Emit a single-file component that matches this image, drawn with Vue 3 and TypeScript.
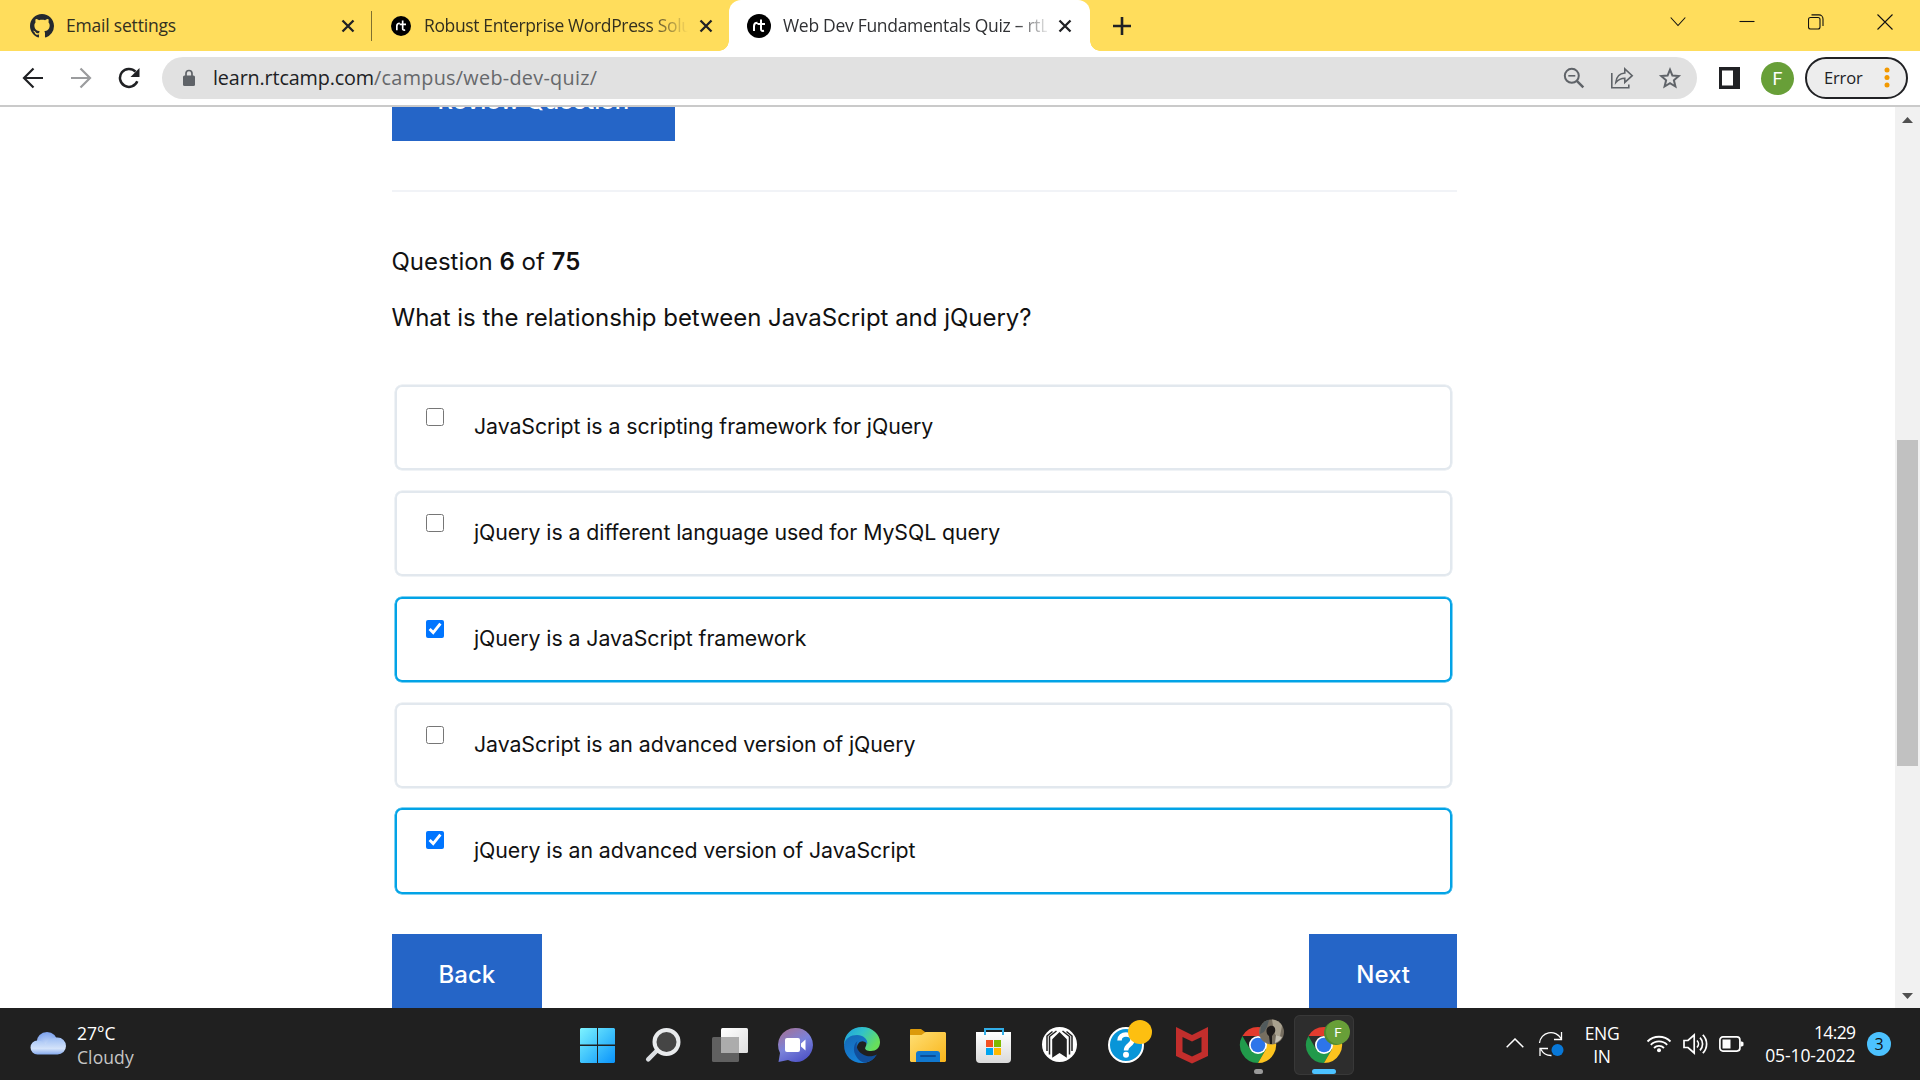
<script setup lang="ts">
interface Option {
  text: string
  checked: boolean
}

const options: Option[] = [
  { text: 'JavaScript is a scripting framework for jQuery', checked: false },
  { text: 'jQuery is a different language used for MySQL query', checked: false },
  { text: 'jQuery is a JavaScript framework', checked: true },
  { text: 'JavaScript is an advanced version of jQuery', checked: false },
  { text: 'jQuery is an advanced version of JavaScript', checked: true },
]
</script>

<template>
  <div class="screen">
    <header class="tabs">
      <div class="tab tab-one">
        <svg class="favicon" width="24" height="24" viewBox="0 0 16 16" fill="#24292f"><path d="M8 0C3.58 0 0 3.58 0 8c0 3.54 2.29 6.53 5.47 7.59.4.07.55-.17.55-.38 0-.19-.01-.82-.01-1.49-2.01.37-2.53-.49-2.69-.94-.09-.23-.48-.94-.82-1.13-.28-.15-.68-.52-.01-.53.63-.01 1.08.58 1.23.82.72 1.21 1.87.87 2.33.66.07-.52.28-.87.51-1.07-1.78-.2-3.64-.89-3.64-3.95 0-.87.31-1.59.82-2.15-.08-.2-.36-1.02.08-2.12 0 0 .67-.21 2.2.82.64-.18 1.32-.27 2-.27s1.36.09 2 .27c1.53-1.04 2.2-.82 2.2-.82.44 1.1.16 1.92.08 2.12.51.56.82 1.27.82 2.15 0 3.07-1.87 3.75-3.65 3.95.29.25.54.73.54 1.48 0 1.07-.01 1.93-.01 2.2 0 .21.15.46.55.38A8.01 8.01 0 0 0 16 8c0-4.42-3.58-8-8-8z"/></svg>
        <span class="tab-title">Email settings</span>
        <svg class="close" width="14" height="14" viewBox="0 0 14 14"><path d="M1.5 1.5l11 11M12.500 1.500l-11 11" stroke="#202124" stroke-width="2.300"/></svg>
      </div>
      <div class="separator"></div>
      <div class="tab tab-two">
        <svg class="favicon" width="20" height="20" viewBox="0 0 24 24"><circle cx="12" cy="12" r="12"/><path d="M7 17V12c0-2.200 1-3.300 3.500-3.300M14 5.500v9.500c0 1.600.8 2.200 3 1.800M10.500 10h7.500" fill="none" stroke="#fff" stroke-width="2"/></svg>
        <span class="tab-title fade-yellow">Robust Enterprise WordPress Solu</span>
        <svg class="close" width="14" height="14" viewBox="0 0 14 14"><path d="M1.500 1.500l11 11M12.500 1.500l-11 11" stroke="#202124" stroke-width="2.300"/></svg>
      </div>
      <div class="tab tab-active">
        <svg class="favicon" width="24" height="24" viewBox="0 0 24 24"><circle cx="12" cy="12" r="12"/><path d="M7 17V12c0-2.200 1-3.300 3.500-3.300M14 5.500v9.500c0 1.600.8 2.200 3 1.800M10.500 10h7.500" fill="none" stroke="#fff" stroke-width="2"/></svg>
        <span class="tab-title fade-white">Web Dev Fundamentals Quiz – rtL</span>
        <svg class="close" width="14" height="14" viewBox="0 0 14 14"><path d="M1.500 1.500l11 11M12.500 1.500l-11 11" stroke="#202124" stroke-width="2.300"/></svg>
      </div>
      <svg class="plus" width="18" height="18" viewBox="0 0 18 18"><path d="M9 0v18M0 9h18" stroke="#202124" stroke-width="2.600"/></svg>
      <div class="window-buttons">
        <svg width="16" height="16" viewBox="0 0 16 16"><path d="M.7 3.500L8 11.500l7.300-8"/></svg>
        <svg width="16" height="16" viewBox="0 0 16 16"><path d="M.5 7.500h15"/></svg>
        <svg width="16" height="16" viewBox="0 0 16 16"><rect x=".5" y="3.500" width="11.500" height="11.500" rx="2"/><path d="M3.500 .9h7.500a4 4 0 0 1 4 4V12"/></svg>
        <svg width="16" height="16" viewBox="0 0 16 16"><path d="M.5 .5l15 15M15.500 .5l-15 15"/></svg>
      </div>
    </header>

    <div class="toolbar">
      <div class="nav">
        <svg width="22" height="22" viewBox="0 0 22 22" fill="none" stroke="#202124" stroke-width="2.200"><path d="M21 11H2.500M11.500 1.500L2 11l9.500 9.500"/></svg>
        <svg width="22" height="22" viewBox="0 0 22 22" fill="none" stroke="#9b9c9e" stroke-width="2.200"><path d="M1 11h18.500M10.500 1.500L20 11l-9.500 9.500"/></svg>
        <svg width="22" height="22" viewBox="0 0 22 22"><path d="M19.300 14.300A9 9 0 1 1 17.500 4.700" fill="none" stroke="#202124" stroke-width="2.500"/><path d="M21.500 1v9h-9z" fill="#202124"/></svg>
      </div>
      <div class="omnibox">
        <svg class="lock" width="14" height="18" viewBox="0 0 14 18"><rect x="1" y="6.500" width="12" height="10.500" rx="1.500" fill="#5f6368"/><path d="M4 7V4.500a3 3 0 0 1 6 0V7" fill="none" stroke="#5f6368" stroke-width="1.700"/></svg>
        <div class="url"><span class="host">learn.rtcamp.com</span><span class="path">/campus/web-dev-quiz/</span></div>
        <div class="omni-icons">
          <svg width="24" height="24" viewBox="0 0 24 24" fill="none" stroke="#5f6368" stroke-width="2"><circle cx="9.800" cy="9.800" r="7"/><path d="M6.300 9.800h7" stroke-width="1.600"/><path d="M14.800 14.800l6.500 6.500" stroke-width="2.500"/></svg>
          <svg width="24" height="24" viewBox="0 0 24 24" fill="none" stroke="#5f6368" stroke-width="1.600"><path d="M1.800 7v14.700h17V18.500"/><path d="M5.800 16.500c.5-5.500 3.500-9 9-9.500V2.800l7.400 6.900-7.400 6.700v-4.200c-4 0-6.500 1.300-9 4.300z"/></svg>
          <svg width="24" height="24" viewBox="0 0 24 24" fill="none" stroke="#5f6368" stroke-width="2"><path d="M12 3.700l2.400 5.900 6.300.5-4.800 4.200 1.500 6.200L12 17.200l-5.400 3.300 1.500-6.200-4.800-4.200 6.300-.5z"/></svg>
        </div>
      </div>
      <svg class="panel" width="21" height="22" viewBox="0 0 21 22"><path d="M0 0h21v22H0z" fill="#202124"/><path d="M3 3.500h11v15H3z" fill="#fff"/></svg>
      <div class="avatar">F</div>
      <div class="error">
        <span>Error</span>
        <svg width="6" height="22" viewBox="0 0 6 22" fill="#f29900"><circle cx="3" cy="3" r="2.500"/><circle cx="3" cy="10.500" r="2.500"/><circle cx="3" cy="18" r="2.500"/></svg>
      </div>
    </div>

    <div class="viewport">
      <main class="page">
        <button class="btn review">Review Question</button>
        <hr>
        <p class="count">Question <b>6</b> of <b>75</b></p>
        <p class="question">What is the relationship between JavaScript and jQuery?</p>
        <div class="options">
          <label v-for="option in options" :key="option.text" class="option" :class="{ selected: option.checked }">
            <input type="checkbox" :checked="option.checked">
            <span>{{ option.text }}</span>
          </label>
        </div>
        <div class="pager">
          <button class="btn">Back</button>
          <button class="btn">Next</button>
        </div>
      </main>
      <div class="scrollbar">
        <svg width="11" height="6" viewBox="0 0 11 6"><path d="M0 6L5.500 0 11 6z" fill="#505050"/></svg>
        <div class="thumb"></div>
        <svg width="11" height="6" viewBox="0 0 11 6"><path d="M0 0l5.500 6L11 0z" fill="#505050"/></svg>
      </div>
    </div>

    <footer class="taskbar">
      <div class="weather">
        <svg width="36" height="24" viewBox="0 0 36 24">
          <defs>
            <radialGradient id="cloudBack" cx=".5" cy=".75" r=".75"><stop offset=".2" stop-color="#c9dcf8"/><stop offset="1" stop-color="#7da2ee"/></radialGradient>
            <linearGradient id="cloudFront" x2="0" y2="1"><stop offset="0" stop-color="#9dbdf4"/><stop offset=".65" stop-color="#d4e3fa"/><stop offset="1" stop-color="#86abee"/></linearGradient>
          </defs>
          <circle cx="17" cy="11.500" r="10.500" fill="url(#cloudBack)"/>
          <path d="M7.500 9.500C11 9.500 14 11 15.500 13.500C18 9 22 6.500 27.500 6.500a8.500 8.500 0 0 1 0 17H7.500a7 7 0 0 1 0-14z" fill="url(#cloudFront)"/>
        </svg>
        <div class="weather-text"><span>27°C</span><span class="dim">Cloudy</span></div>
      </div>

      <div class="apps">
        <div class="app">
          <svg viewBox="0 0 60 60">
            <defs><linearGradient id="win" gradientUnits="userSpaceOnUse" x1="12" y1="13" x2="47" y2="48"><stop stop-color="#7df3ff"/><stop offset=".5" stop-color="#41c4fc"/><stop offset="1" stop-color="#0a93fb"/></linearGradient></defs>
            <path d="M13 13h16v16.500H12V14zM30 13h16l1 1v15.500H30zM12 31h17v17H13l-1-1zM30 31h17v16l-1 1H30z" fill="url(#win)"/>
          </svg>
        </div>
        <div class="app">
          <svg viewBox="0 0 60 60">
            <path d="M22.500 36l-8.300 8.300" stroke="#dcdfe3" stroke-width="4.500" stroke-linecap="round"/>
            <circle cx="32.500" cy="27" r="12" fill="#454545" stroke="#e9ebed" stroke-width="4"/>
          </svg>
        </div>
        <div class="app">
          <svg viewBox="0 0 60 60">
            <defs><linearGradient id="tv" x2="1" y2="1"><stop stop-color="#fff"/><stop offset="1" stop-color="#dedede"/></linearGradient></defs>
            <rect x="21" y="13" width="27" height="25" rx="1.500" fill="url(#tv)"/>
            <rect x="12" y="22" width="27" height="25" rx="1.500" fill="#606060"/>
            <path d="M21 22h18v16H21z" fill="#acacac"/>
          </svg>
        </div>
        <div class="app">
          <svg viewBox="0 0 60 60">
            <defs><linearGradient id="chat" x1=".1" y1=".1" x2=".6" y2="1"><stop stop-color="#a0739d"/><stop offset=".5" stop-color="#7b83da"/><stop offset="1" stop-color="#5257c9"/></linearGradient></defs>
            <path d="M29 13a17 17 0 1 1-7 32l-9.500 2 1.500-9A17 17 0 0 1 29 13z" fill="url(#chat)"/>
            <rect x="19" y="23" width="15" height="14" rx="2" fill="#fff"/><path d="M35 28.500l4.500-4v11l-4.500-4z" fill="#fff"/>
          </svg>
        </div>
        <div class="app">
          <svg viewBox="0 0 60 60">
            <defs>
              <linearGradient id="edgeTop" x2="1" y2=".5"><stop stop-color="#1b9de2"/><stop offset=".5" stop-color="#32c2c8"/><stop offset="1" stop-color="#67df5b"/></linearGradient>
              <linearGradient id="edgeLow" x2=".5" y2="1"><stop stop-color="#1568b5"/><stop offset="1" stop-color="#1683d9"/></linearGradient>
            </defs>
            <path d="M12 30C12 19 20 12 30 12c11 0 18 8 18 15 0 6-4 9-9 9-4 0-7-1.500-5.500-4 3-5-1-9-7-9-6 0-11 2-14.500 7z" fill="url(#edgeTop)"/>
            <path d="M12 30c1-7 7-10 13-10 6 0 11 4 10.300 9C31 23.500 25 27 25 33c0 8 9 14 18 8.500-3 4-7 6.500-13 6.500-10 0-18-7-18-18z" fill="url(#edgeLow)"/>
            <path d="M25.500 26C22 29 21 34 23 39c2 5 5.500 8 10 8.800 5-.8 9-3.500 12-8.300-4 2-9 2.500-13 .5-6-3-9-8-6.500-14z" fill="#114f9c"/>
          </svg>
        </div>
        <div class="app">
          <svg viewBox="0 0 60 60">
            <defs><linearGradient id="folder" x2="1" y2="1"><stop stop-color="#ffdf74"/><stop offset="1" stop-color="#f9b51a"/></linearGradient></defs>
            <path d="M12 15a1 1 0 0 1 1-1h10l4 3v5H12z" fill="#dc9a0b"/>
            <path d="M12 20h11.500l4-3H47l1 1v28l-1 1H13l-1-1z" fill="url(#folder)"/>
            <path d="M18 47v-8a3 3 0 0 1 3-3h18a3 3 0 0 1 3 3v8z" fill="#1178cf"/>
            <path d="M23 41h14" stroke="#0b4e98" stroke-width="2" stroke-linecap="round"/>
          </svg>
        </div>
        <div class="app">
          <svg viewBox="0 0 60 60">
            <defs><linearGradient id="bag" x2="0" y2="1"><stop stop-color="#fff"/><stop offset="1" stop-color="#dadada"/></linearGradient></defs>
            <path d="M12 17h35v27a4 4 0 0 1-4 4H16a4 4 0 0 1-4-4z" fill="url(#bag)"/>
            <path d="M21 20v-6h18v6" fill="none" stroke="#32aee8" stroke-width="2"/>
            <path d="M22 25h7v7h-7z" fill="#f25022"/><path d="M30 25h7v7h-7z" fill="#7fba00"/><path d="M22 33h7v7h-7z" fill="#00a4ef"/><path d="M30 33h7v7h-7z" fill="#ffb900"/>
          </svg>
        </div>
        <div class="app">
          <svg viewBox="0 0 60 60">
            <circle cx="29.500" cy="29.500" r="17.500" fill="#fff"/>
            <path d="M29.500 17l7.300 7.300v18.400l-7.300-4.700-7.300 4.700V24.300z" fill="#222"/>
            <path d="M26.500 16l-7 5.500V39.500M22.500 16.500l-5.500 4.500V36M32.500 16l7 5.500V39.500M36.500 16.500l5.500 4.500V36" fill="none" stroke="#222" stroke-width="1.500"/>
          </svg>
        </div>
        <div class="app">
          <svg viewBox="0 0 60 60">
            <circle cx="30" cy="30" r="17" fill="#0895d8" stroke="#fff" stroke-width="2"/>
            <path d="M23.500 25.500c0-4 3-6 6.500-6s6.500 2 6.500 5.500c0 5-6.500 4.500-6.500 10.500" fill="none" stroke="#fff" stroke-width="4.500"/>
            <circle cx="30" cy="39.700" r="3" fill="#fff"/>
            <circle cx="44" cy="17" r="12" fill="#fdbf10"/>
          </svg>
        </div>
        <div class="app">
          <svg viewBox="0 0 60 60"><path d="M14 12l16 8 16-8v29l-16 7.500L14 41zM20.500 22v15l9.500 4.500 9.500-4.500V22L30 26.500z" fill="#c22e2c" fill-rule="evenodd"/></svg>
        </div>
        <div class="app">
          <svg viewBox="0 0 60 60">
            <path d="M14.400 21A18 18 0 0 1 45.600 21H30z" fill="#e33b2e"/><path d="M14.400 21A18 18 0 0 0 30 48l7.800-13.500H22.200z" fill="#219a4b"/><path d="M45.600 21A18 18 0 0 1 30 48l7.800-13.500L38 21z" fill="#fcc31e"/>
            <circle cx="30" cy="30" r="9" fill="#fff"/><circle cx="30" cy="30" r="7.300" fill="#2d75ea"/>
            <circle cx="43.500" cy="17" r="12.500" fill="#766e60"/>
            <path d="M44 4.500a12.500 12.500 0 0 1 10 6l-2 11-5-2-2-9z" fill="#a9a18f"/><path d="M33 11c2.500-4 5-6 8-6l-2 7-3 5-4 2z" fill="#515a5c"/><path d="M48 20l6 2c-1 3-4 5-7 6z" fill="#c5c0b3"/>
            <path d="M42 11c4-1 6 2 5 6l-3 4v8h-2l-1-8c-4-3-3-9 1-10z" fill="#1d1a1a"/>
          </svg>
          <i class="indicator"></i>
        </div>
        <div class="app active">
          <svg viewBox="0 0 60 60">
            <path d="M14.400 21A18 18 0 0 1 45.600 21H30z" fill="#e33b2e"/><path d="M14.400 21A18 18 0 0 0 30 48l7.800-13.500H22.200z" fill="#219a4b"/><path d="M45.600 21A18 18 0 0 1 30 48l7.800-13.500L38 21z" fill="#fcc31e"/>
            <circle cx="30" cy="30" r="9" fill="#fff"/><circle cx="30" cy="30" r="7.300" fill="#2d75ea"/>
            <circle cx="42" cy="18" r="12" fill="#4f8a30"/><circle cx="44" cy="17" r="12" fill="#689f38"/>
            <text x="44" y="21.800" text-anchor="middle" font-family="Roboto, sans-serif" font-size="13.500" fill="#fff">F</text>
          </svg>
          <i class="indicator"></i>
        </div>
      </div>

      <div class="tray">
        <svg class="up" width="18" height="10" viewBox="0 0 18 10"><path d="M.7 9.300L9 1l8.300 8.300" fill="none" stroke="#fff" stroke-width="1.500"/></svg>
        <svg class="sync" width="26" height="26" viewBox="0 0 26 26" fill="none" stroke="#fff" stroke-width="1.300"><path d="M1.500 12A11.500 11.500 0 0 1 23 7.500M23.500 1v7.500H16M13.500 24.500A11.500 11.500 0 0 1 3 18.500M2 25v-7.500h8"/><circle cx="19.500" cy="19" r="6" fill="#0878d8" stroke="none"/></svg>
        <div class="lang"><span>ENG</span><span>IN</span></div>
        <svg class="wifi" width="26" height="20" viewBox="0 0 26 20" fill="none" stroke="#fff" stroke-width="1.800"><path d="M1.500 7.500a16.300 16.300 0 0 1 23 0M4.800 10.800a11.600 11.600 0 0 1 16.400 0M8 14a7 7 0 0 1 10 0"/><circle cx="13" cy="16.300" r="2" fill="#fff" stroke="none"/></svg>
        <svg class="speaker" width="26" height="22" viewBox="0 0 26 22" fill="none" stroke="#fff" stroke-width="1.700"><path d="M2 7.500h4L12.200 2v18L6 14.500H2zM15 7.500a5 5 0 0 1 0 7M18 4.700a9 9 0 0 1 0 12.600M20.800 1.800a13 13 0 0 1 0 18.400"/></svg>
        <svg class="battery" width="25" height="16" viewBox="0 0 25 16"><rect x=".9" y=".9" width="20" height="14.200" rx="3" fill="none" stroke="#fff" stroke-width="1.700"/><path d="M3.500 3.500h8v9h-8z" fill="#fff"/><path d="M21.500 5.500h1.500l1.500 1v3l-1.500 1h-1.500z" fill="#fff"/></svg>
        <div class="clock"><span class="time">14:29</span><span>05-10-2022</span></div>
        <div class="notice">3</div>
      </div>
    </footer>
  </div>
</template>

<style>
body {
  margin: 0;
  overflow: hidden;
}
</style>

<style scoped>
* {
  box-sizing: border-box;
}
svg {
  display: block;
  flex: none;
}
.screen {
  width: 1920px;
  height: 1080px;
  display: flex;
  flex-direction: column;
  overflow: hidden;
  background: #fff;
  font-family: "Open Sans", "Noto Sans", sans-serif;
  color: #202124;
}

/* Tab strip */
.tabs {
  height: 51px;
  flex: none;
  display: flex;
  align-items: center;
  background: #ffdd5c;
}
.tab {
  height: 51px;
  display: flex;
  align-items: center;
  font-size: 17.5px;
  line-height: 51px;
  letter-spacing: -0.36px;
}
.favicon {
  flex: none;
}
.tab-title {
  white-space: nowrap;
  overflow: hidden;
  color: #33301f;
}
.tab-one {
  width: 371px;
  padding-left: 30px;
  letter-spacing: -0.2px;
}
.tab-one .tab-title {
  width: 263px;
  margin: 0 12px 0 12px;
}
.separator {
  width: 1px;
  height: 30px;
  background: #80702f;
}
.tab-two {
  width: 357px;
  padding-left: 19px;
}
.tab-two .tab-title {
  width: 264px;
  margin: 0 11px 0 13px;
}
.fade-yellow {
  mask-image: linear-gradient(90deg, #000 225px, transparent 264px);
}
.tab-active {
  position: relative;
  width: 361px;
  padding-left: 18px;
  background: #fff;
  border-radius: 12px 12px 0 0;
}
.tab-active::before,
.tab-active::after {
  content: "";
  position: absolute;
  bottom: 0;
  width: 10px;
  height: 10px;
}
.tab-active::before {
  right: 100%;
  background: radial-gradient(circle at 0 0, transparent 9.5px, #fff 10px);
}
.tab-active::after {
  left: 100%;
  background: radial-gradient(circle at 100% 0, transparent 9.5px, #fff 10px);
}
.tab-active .tab-title {
  width: 264px;
  margin: 0 11px 0 12px;
  color: #303134;
  letter-spacing: -0.3px;
}
.fade-white {
  mask-image: linear-gradient(90deg, #000 232px, transparent 268px);
}
.plus {
  margin-left: 23px;
}
.window-buttons {
  display: flex;
  gap: 53px;
  margin: -8px 27px 0 auto;
}
.window-buttons svg {
  fill: none;
  stroke: #111;
  stroke-width: 1.1;
}

/* Toolbar */
.toolbar {
  height: 56px;
  flex: none;
  display: flex;
  align-items: center;
  border-bottom: 2px solid #cacaca;
}
.nav {
  display: flex;
  gap: 26px;
  width: 162px;
  padding-left: 22px;
}
.omnibox {
  width: 1535px;
  height: 42px;
  border-radius: 21px;
  background: #e1e1e1;
  display: flex;
  align-items: center;
  padding: 0 15px 0 20px;
}
.lock {
  margin-right: 17px;
}
.url {
  display: flex;
  font-size: 19.8px;
  line-height: 42px;
  color: #66686b;
}
.host {
  color: #202124;
  letter-spacing: -0.15px;
}
.path {
  letter-spacing: 0.3px;
}
.omni-icons {
  display: flex;
  gap: 24px;
  margin-left: auto;
}
.panel {
  margin-left: 22px;
}
.avatar {
  width: 33px;
  height: 33px;
  margin-left: 21px;
  border-radius: 50%;
  background: #689f38;
  color: #fff;
  font: 18px/33px Roboto, sans-serif;
  text-align: center;
}
.error {
  width: 103px;
  height: 42px;
  margin-left: 11px;
  border: 2px solid #202124;
  border-radius: 21px;
  background: #ededed;
  display: flex;
  align-items: center;
  justify-content: space-between;
  padding: 0 16px 0 17px;
  font-size: 16.5px;
  letter-spacing: -0.15px;
}
.error span {
  margin-bottom: 2px;
}

/* Page */
.viewport {
  height: 901px;
  flex: none;
  display: flex;
  overflow: hidden;
  font-family: Inter, "Liberation Sans", sans-serif;
  color: #111;
}
.page {
  width: 1065.5px;
  margin-left: 391.5px;
}
.btn {
  display: block;
  height: 83px;
  padding: 0 47px;
  border: 0;
  border-radius: 0;
  background: #2565c7;
  color: #fff;
  font: 500 24px/82px Inter, "Liberation Sans", sans-serif;
  white-space: nowrap;
}
.review {
  margin-top: -49px;
  padding: 2px 46px 0;
}
hr {
  height: 2px;
  margin: 48.5px 0 0;
  border: 0;
  background: #f1f3f7;
}
p {
  margin: 0;
  font-size: 24px;
  line-height: 36px;
  letter-spacing: -0.02px;
}
b {
  font-weight: 600;
}
.count {
  margin-top: 52px;
}
.question {
  margin-top: 20px;
}
.options {
  display: flex;
  flex-direction: column;
  gap: 20.6px;
  margin: 49.4px 5px 0 3.5px;
}
.option {
  display: flex;
  align-items: flex-start;
  height: 85.3px;
  border: 2px solid #e2e8ee;
  box-shadow: 0 0 0 0.5px #e2e8ee;
  border-radius: 7px;
  font-size: 21.3px;
  line-height: 30px;
  letter-spacing: -0.065px;
}
.option.selected {
  border-color: #02a3e6;
  box-shadow: 0 0 0 0.5px #02a3e6;
}
.option input {
  width: 18px;
  height: 18px;
  margin: 21px 30px 0 29px;
}
.option span {
  margin-top: 24.5px;
}
.pager {
  display: flex;
  justify-content: space-between;
  margin-top: 40px;
}
.pager .btn {
  padding-bottom: 2px;
}
.scrollbar {
  width: 25px;
  margin-left: auto;
  display: flex;
  flex-direction: column;
  align-items: center;
  background: #f1f1f1;
  padding: 10px 0 9px;
}
.thumb {
  width: 21px;
  height: 326px;
  margin: 317px 0 auto;
  background: #c1c1c1;
}

/* Taskbar */
.taskbar {
  height: 72px;
  flex: none;
  display: flex;
  background: #202020;
  color: #fff;
  font-size: 17.5px;
  line-height: 23px;
}
.weather {
  width: 568px;
  display: flex;
  align-items: flex-start;
  padding-left: 30px;
}
.weather svg {
  margin-top: 22.5px;
}
.weather-text {
  display: flex;
  flex-direction: column;
  margin: 14px 0 0 11px;
}
.dim {
  margin-top: 1px;
  letter-spacing: 0.1px;
  color: #c6c6c6;
}
.apps {
  display: flex;
  gap: 6px;
  padding-top: 7px;
}
.app {
  position: relative;
  width: 60px;
  height: 60px;
  border-radius: 6px;
}
.app svg {
  width: 60px;
  height: 60px;
}
.active {
  background: #2d2d2d;
  box-shadow: inset 0 0 0 1px #383838;
}
.indicator {
  position: absolute;
  left: 50%;
  bottom: 1px;
  width: 9px;
  height: 5px;
  margin-left: -4.5px;
  border-radius: 3px;
  background: #9a9a9a;
}
.active .indicator {
  width: 24px;
  margin-left: -12px;
  background: #4cc2ff;
}
.tray {
  display: flex;
  align-items: flex-start;
  margin-left: auto;
  padding-right: 29px;
}
.up {
  margin-top: 30px;
}
.sync {
  margin: 23px 0 0 14px;
}
.lang {
  width: 56px;
  margin: 14px 0 0 10px;
  display: flex;
  flex-direction: column;
  align-items: center;
  letter-spacing: -0.3px;
}
.wifi {
  margin: 26px 0 0 16px;
}
.speaker {
  margin: 25px 0 0 10px;
}
.battery {
  margin: 28px 0 0 11px;
}
.clock {
  width: 111.5px;
  margin-top: 12.5px;
  display: flex;
  flex-direction: column;
  align-items: flex-end;
  letter-spacing: -0.1px;
}
.time {
  letter-spacing: -0.6px;
}
.notice {
  width: 24px;
  height: 24px;
  margin: 24px 0 0 11.5px;
  border-radius: 50%;
  background: #4cc2ff;
  color: #111;
  font-size: 16px;
  line-height: 24px;
  text-align: center;
}
</style>
